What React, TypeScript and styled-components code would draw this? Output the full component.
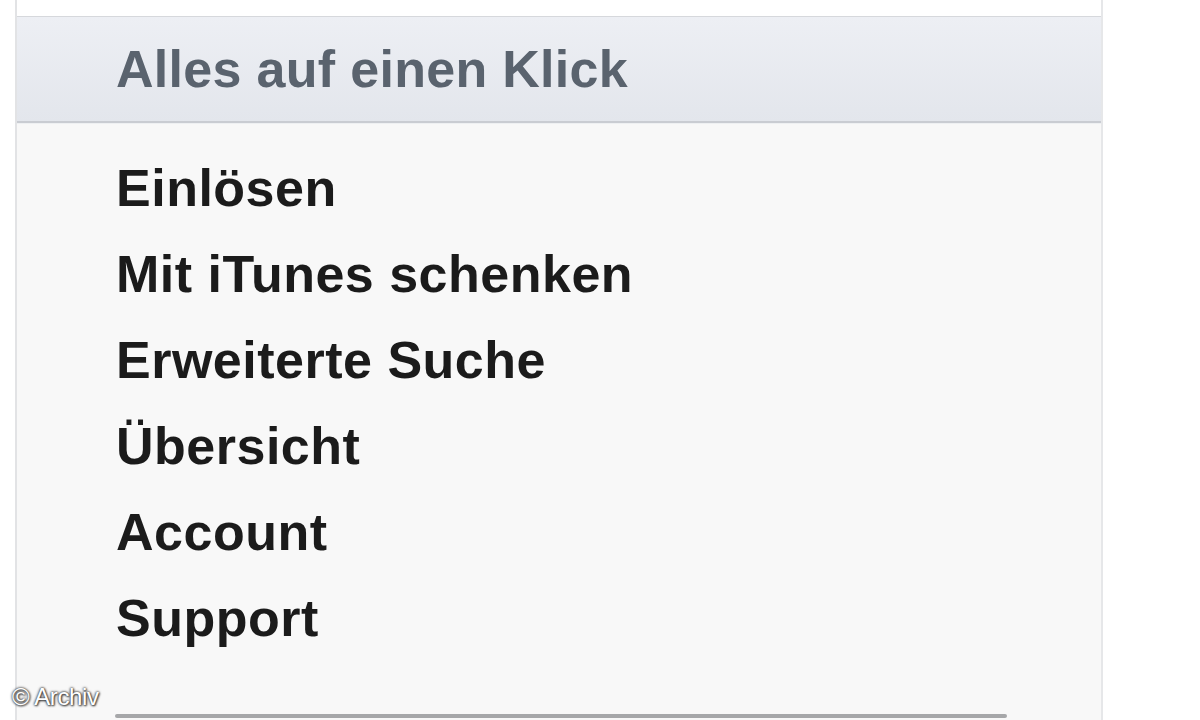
import styled, { createGlobalStyle } from "styled-components";

const GlobalStyle = createGlobalStyle`
  html, body {
    margin: 0;
    padding: 0;
    background: #ffffff;
    overflow: hidden;
  }
  body {
    font-family: "Liberation Sans", Arial, Helvetica, sans-serif;
  }
`;

const items = [
  "Einlösen",
  "Mit iTunes schenken",
  "Erweiterte Suche",
  "Übersicht",
  "Account",
  "Support",
];

export default function App() {
  return (
    <Page>
      <GlobalStyle />
      <Panel>
        <TopStrip />
        <Header>
          <HeaderTitle>Alles auf einen Klick</HeaderTitle>
        </Header>
        <List>
          {items.map((item) => (
            <Item key={item}>
              <ItemLink href="#">{item}</ItemLink>
            </Item>
          ))}
        </List>
        <Footer>
          <Rule />
        </Footer>
      </Panel>
      <Watermark>© Archiv</Watermark>
    </Page>
  );
}

const Page = styled.div`
  position: relative;
  width: 1200px;
  height: 720px;
  background: #ffffff;
  overflow: hidden;
`;

const Panel = styled.div`
  margin-left: 15px;
  width: 1088px;
  height: 720px;
  display: flex;
  flex-direction: column;
  background: #f8f8f8;
  border-left: 2px solid #e2e3e5;
  border-right: 2px solid #e6e7e9;
  box-sizing: border-box;
`;

const TopStrip = styled.div`
  height: 16px;
  background: #ffffff;
  border-bottom: 1px solid #d6d8dc;
`;

const Header = styled.div`
  height: 104px;
  display: flex;
  align-items: center;
  padding-left: 99px;
  background: linear-gradient(#edeff4, #e3e6ec);
  border-bottom: 2px solid #c9ccd2;
  box-shadow: 0 1px 0 #eef0f2;
`;

const HeaderTitle = styled.h2`
  margin: 0;
  font-size: 52px;
  line-height: 58px;
  font-weight: 700;
  color: #5a636e;
  letter-spacing: 0.3px;
`;

const List = styled.ul`
  list-style: none;
  margin: 0;
  padding: 22px 0 0 99px;
`;

const Item = styled.li`
  height: 86px;
  line-height: 86px;
`;

const ItemLink = styled.a`
  font-size: 52px;
  font-weight: 700;
  color: #1b1b1b;
  text-decoration: none;
  letter-spacing: 0.5px;
`;

const Footer = styled.div`
  flex: 1;
  display: flex;
  align-items: flex-end;
  padding: 0 0 2px 98px;
`;

const Rule = styled.div`
  width: 892px;
  height: 4px;
  border-radius: 2px;
  background: #a6a7a9;
`;

const Watermark = styled.div`
  position: absolute;
  left: 12px;
  top: 683px;
  font-size: 24px;
  color: #ffffff;
  letter-spacing: -0.4px;
  text-shadow: 0 0 2px #333, 0 0 3px #444, 1px 1px 2px #555;
`;
